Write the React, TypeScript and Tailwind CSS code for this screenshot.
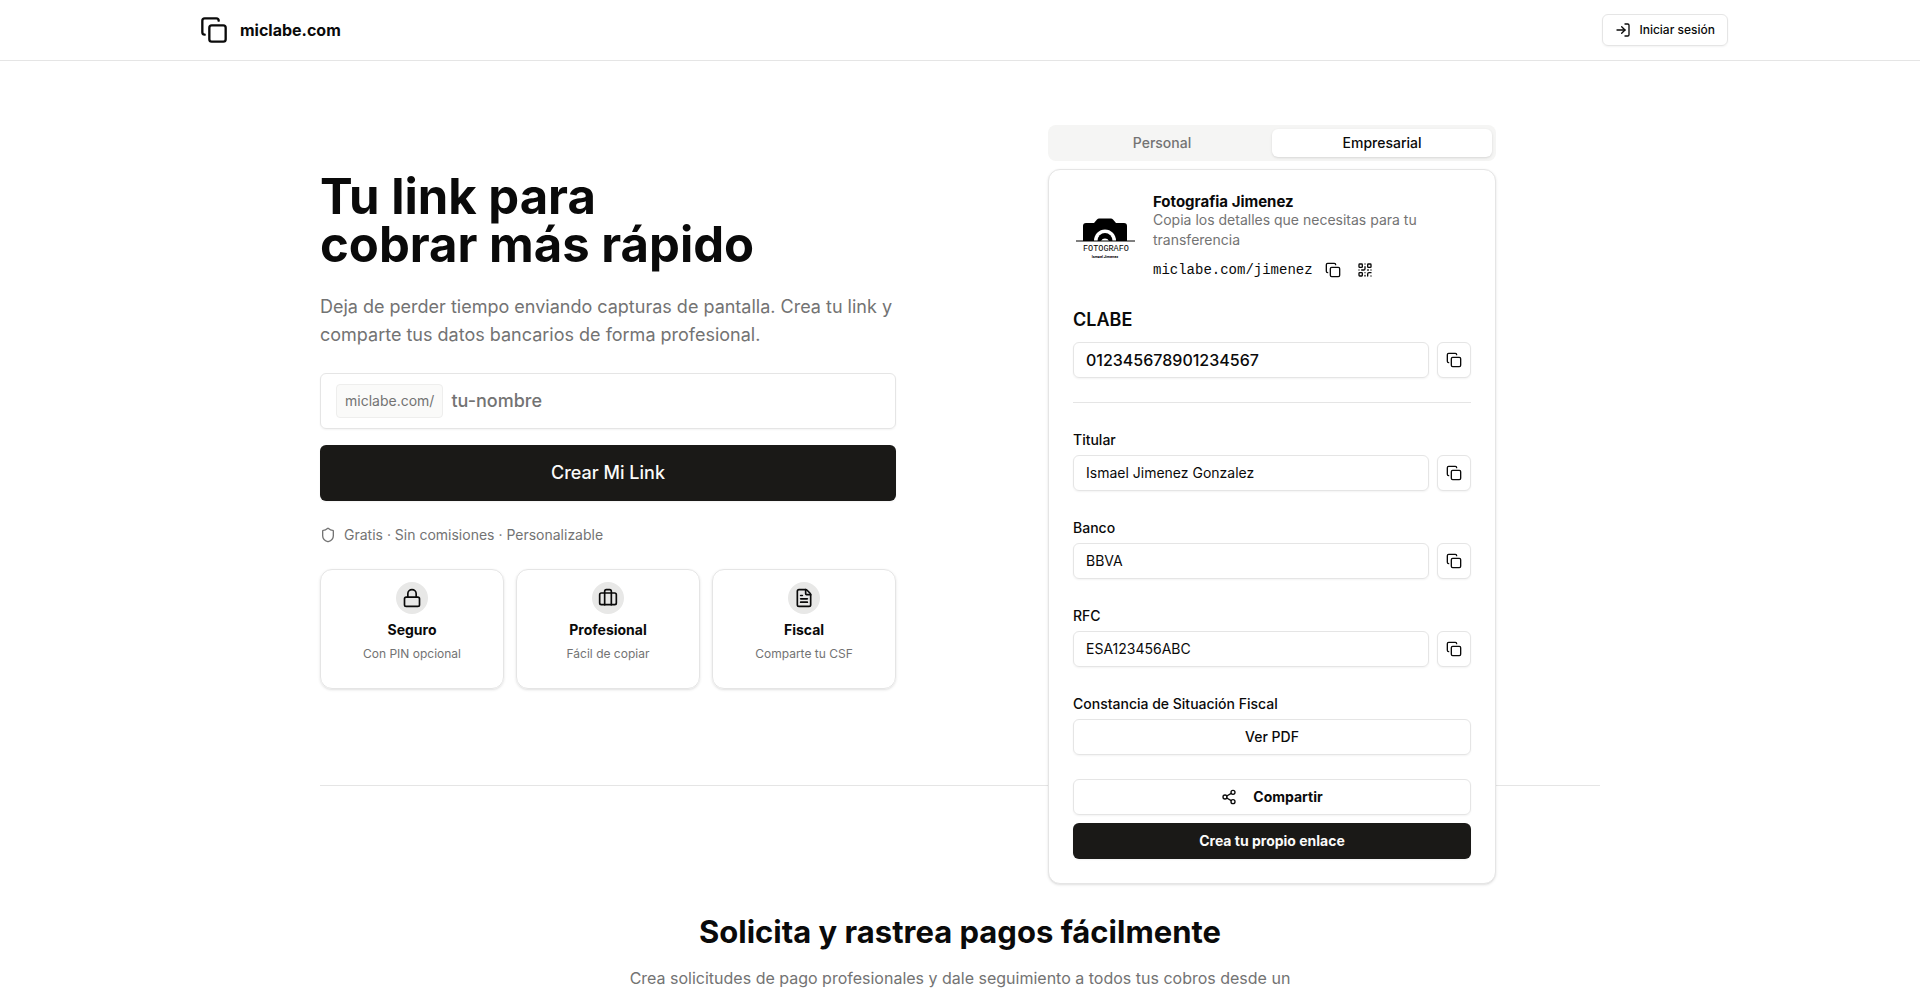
import { Briefcase, Copy, FileText, Lock, LogIn, QrCode, Share2, Shield } from "lucide-react";

const features = [
  { icon: Lock, title: "Seguro", text: "Con PIN opcional" },
  { icon: Briefcase, title: "Profesional", text: "Fácil de copiar" },
  { icon: FileText, title: "Fiscal", text: "Comparte tu CSF" },
];

const fields = [
  { id: "titular", label: "Titular", value: "Ismael Jimenez Gonzalez" },
  { id: "banco", label: "Banco", value: "BBVA" },
  { id: "rfc", label: "RFC", value: "ESA123456ABC" },
];

function CopyButton() {
  return (
    <button aria-label="Copiar" className="flex h-9 w-[34px] shrink-0 items-center justify-center rounded-md border border-[#e5e5e5] bg-white shadow-xs">
      <Copy className="size-4" />
    </button>
  );
}

function CameraLogo() {
  return (
    <svg viewBox="0 0 64 64" className="size-16 shrink-0" role="img" aria-label="Fotografo">
      <path d="M10 35V20q0-3 3-3h8l3-3.500q1-1 2-1h12q1 0 2 1l3 3.500h8q3 0 3 3v15z" fill="#000" />
      <path d="M21 35a11 11.500 0 0 1 22 0z" fill="#fff" />
      <path d="M24.500 35a7.500 8 0 0 1 15 0z" fill="#000" />
      <path d="M28 35a4.500 4.500 0 0 1 8 0z" fill="#fff" />
      <path d="M3 35h59" stroke="#000" strokeWidth="1" />
      <text x="10" y="45" fontFamily="Liberation Mono, monospace" fontSize="8.500">FOTOGRAFO</text>
      <text x="32" y="52" fontFamily="Inter, sans-serif" fontSize="3.500" fontWeight="700" textAnchor="middle">Ismael Jimenez</text>
    </svg>
  );
}

function Header() {
  return (
    <header className="border-b border-[#e5e5e5]">
      <div className="mx-auto flex h-15 max-w-[1536px] items-center justify-between pl-2">
        <a href="/" className="flex items-center gap-3 font-bold">
          <Copy className="size-7" />
          miclabe.com
        </a>
        <button className="flex h-8 items-center gap-2 rounded-md border border-[#e5e5e5] px-3 text-xs font-medium shadow-xs">
          <LogIn className="size-4" />
          Iniciar sesión
        </button>
      </div>
    </header>
  );
}

function Pitch() {
  return (
    <div className="w-full max-w-xl pt-12 pb-8">
      <h1 className="text-[49px] leading-12 font-bold">
        Tu link para
        <br />
        cobrar más rápido
      </h1>
      <p className="mt-6 text-lg leading-7 text-[#737373]">
        Deja de perder tiempo enviando capturas de pantalla. Crea tu link y comparte tus datos bancarios de forma profesional.
      </p>
      <form className="mt-6 flex flex-col gap-4">
        <div className="flex h-14 items-center gap-2 rounded-md border border-[#e5e5e5] px-[15px] shadow-xs">
          <label htmlFor="slug" className="flex h-[34px] items-center rounded-sm border border-[#eeeeed] bg-[#fafaf9] px-2 text-sm text-[#737373]">
            miclabe.com/
          </label>
          <input id="slug" placeholder="tu-nombre" className="min-w-0 flex-1 text-lg font-medium outline-none placeholder:text-[#737373]" />
        </div>
        <button type="button" className="h-14 rounded-md bg-[#1a1917] text-lg font-medium text-[#fafaf9] shadow-xs">
          Crear Mi Link
        </button>
      </form>
      <div className="mt-6 flex items-center gap-2 text-sm text-[#737373]">
        <Shield className="size-4" />
        Gratis · Sin comisiones · Personalizable
      </div>
      <div className="mt-6 grid grid-cols-3 gap-3">
        {features.map(({ icon: Icon, title, text }) => (
          <div key={title} className="flex h-30 flex-col items-center rounded-xl border border-[#e5e5e5] pt-3 shadow-sm">
            <div className="flex size-8 items-center justify-center rounded-full bg-[#e8e8e7]">
              <Icon className="size-5" />
            </div>
            <h3 className="mt-1 text-sm leading-6 font-bold">{title}</h3>
            <p className="text-xs leading-6 text-[#737373]">{text}</p>
          </div>
        ))}
      </div>
    </div>
  );
}

function AccountCard() {
  return (
    <div className="w-full max-w-md">
      <div role="tablist" className="grid h-9 grid-cols-2 rounded-lg bg-[#f5f5f4] p-1 text-sm font-medium">
        <button role="tab" aria-selected="false" className="rounded-md text-[#737373]">Personal</button>
        <button role="tab" aria-selected="true" className="rounded-md bg-white shadow-sm">Empresarial</button>
      </div>
      <div className="mt-2 flex flex-col gap-6 rounded-xl border border-[#e5e5e5] bg-white p-6 shadow-sm">
        <div className="flex items-center gap-4">
          <CameraLogo />
          <div>
            <h2 className="text-[15px] leading-4 font-bold">Fotografia Jimenez</h2>
            <p className="text-sm text-[#737373]">Copia los detalles que necesitas para tu transferencia</p>
            <div className="mt-2 flex h-6 items-center gap-2">
              <span className="font-[Liberation_Mono,monospace] text-sm">miclabe.com/jimenez</span>
              <button aria-label="Copiar enlace" className="flex size-6 items-center justify-center"><Copy className="size-4" /></button>
              <button aria-label="Código QR" className="flex size-6 items-center justify-center"><QrCode className="size-4" /></button>
            </div>
          </div>
        </div>
        <div className="flex flex-col gap-2">
          <label htmlFor="clabe" className="text-lg leading-7 font-semibold">CLABE</label>
          <div className="flex gap-2">
            <input id="clabe" readOnly defaultValue="012345678901234567" className="h-9 min-w-0 flex-1 rounded-md border border-[#e5e5e5] px-3 text-base font-medium shadow-xs" />
            <CopyButton />
          </div>
        </div>
        <hr className="border-[#e5e5e5]" />
        {fields.map((field) => (
          <div key={field.id} className="flex flex-col gap-2">
            <label htmlFor={field.id} className="pt-1.5 text-sm leading-none font-medium">{field.label}</label>
            <div className="flex gap-2">
              <input id={field.id} readOnly defaultValue={field.value} className="h-9 min-w-0 flex-1 rounded-md border border-[#e5e5e5] px-3 pb-0.5 text-sm shadow-xs" />
              <CopyButton />
            </div>
          </div>
        ))}
        <div className="flex flex-col gap-2">
          <h3 className="pt-1.5 text-sm leading-none font-medium">Constancia de Situación Fiscal</h3>
          <button className="h-9 rounded-md border border-[#e5e5e5] text-sm font-medium shadow-xs">Ver PDF</button>
        </div>
        <div className="flex flex-col gap-2">
          <button className="flex h-9 items-center justify-center gap-4 rounded-md border border-[#e5e5e5] text-sm font-bold shadow-xs">
            <Share2 className="size-4" />
            Compartir
          </button>
          <button className="h-9 rounded-md bg-[#1a1917] text-sm font-bold text-[#fafaf9] shadow-xs">Crea tu propio enlace</button>
        </div>
      </div>
    </div>
  );
}

export default function App() {
  return (
    <div className="bg-white font-[Inter,sans-serif] text-[#0a0a0a]">
      <Header />
      <main className="mx-auto max-w-7xl">
        <section className="flex gap-12 border-b border-[#e5e5e5] py-16">
          <Pitch />
          {/* the card hangs over the section's bottom border */}
          <div className="flex h-0 flex-1 justify-center">
            <AccountCard />
          </div>
        </section>
        <section className="pt-32 text-center">
          <h2 className="text-[31px] leading-9 font-bold">Solicita y rastrea pagos fácilmente</h2>
          <p className="mx-auto mt-4 max-w-2xl text-base text-[#737373]">
            Crea solicitudes de pago profesionales y dale seguimiento a todos tus cobros desde un
          </p>
        </section>
      </main>
    </div>
  );
}
